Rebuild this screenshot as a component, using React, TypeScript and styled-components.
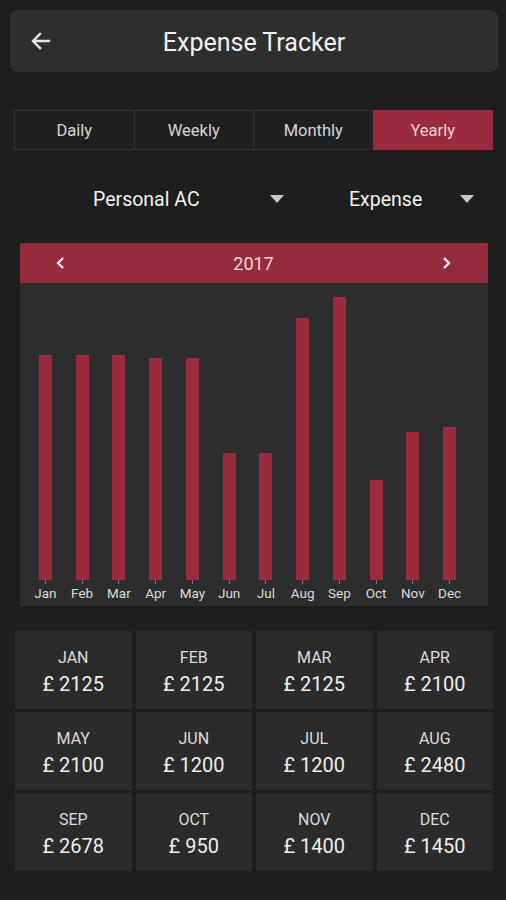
import styled, { createGlobalStyle } from 'styled-components'

const months = [
    { short: 'Jan', value: 2125 },
    { short: 'Feb', value: 2125 },
    { short: 'Mar', value: 2125 },
    { short: 'Apr', value: 2100 },
    { short: 'May', value: 2100 },
    { short: 'Jun', value: 1200 },
    { short: 'Jul', value: 1200 },
    { short: 'Aug', value: 2480 },
    { short: 'Sep', value: 2678 },
    { short: 'Oct', value: 950 },
    { short: 'Nov', value: 1400 },
    { short: 'Dec', value: 1450 },
]

const tabs = ['Daily', 'Weekly', 'Monthly', 'Yearly']

const PX_PER_UNIT = 0.1057

const BackArrow = () => (
    <svg width="24" height="24" viewBox="0 0 24 24" fill="none">
        <path d="M20 12H5M11 5l-7 7 7 7" stroke="#e6e6e6" strokeWidth="2.4" strokeLinecap="square" />
    </svg>
)

const Chevron = ({ dir }: { dir: 'left' | 'right' }) => (
    <svg width="14" height="14" viewBox="0 0 14 14" fill="none">
        <path
            d={dir === 'left' ? 'M9 2L4 7l5 5' : 'M5 2l5 5-5 5'}
            stroke="#f2f2f2"
            strokeWidth="2.2"
        />
    </svg>
)

export default function App() {
    return (
        <>
            <GlobalStyle />
            <Page>
                <Header>
                    <BackButton>
                        <BackArrow />
                    </BackButton>
                    <Title>Expense Tracker</Title>
                </Header>

                <Tabs>
                    {tabs.map((tab) => (
                        <Tab key={tab} $active={tab === 'Yearly'}>
                            {tab}
                        </Tab>
                    ))}
                </Tabs>

                <Filters>
                    <Dropdown $width={197}>
                        Personal AC
                        <Caret />
                    </Dropdown>
                    <Dropdown $width={131}>
                        Expense
                        <Caret />
                    </Dropdown>
                </Filters>

                <ChartCard>
                    <ChartHeader>
                        <Chevron dir="left" />
                        <Year>2017</Year>
                        <Chevron dir="right" />
                    </ChartHeader>
                    <Plot>
                        {months.map((m) => (
                            <BarColumn key={m.short}>
                                <Bar style={{ height: Math.round(m.value * PX_PER_UNIT) }} />
                                <Tick />
                                <BarLabel>{m.short}</BarLabel>
                            </BarColumn>
                        ))}
                    </Plot>
                </ChartCard>

                <Totals>
                    {months.map((m) => (
                        <Cell key={m.short}>
                            <CellMonth>{m.short.toUpperCase()}</CellMonth>
                            <CellValue>£ {m.value}</CellValue>
                        </Cell>
                    ))}
                </Totals>
            </Page>
        </>
    )
}

const GlobalStyle = createGlobalStyle`
    body {
        margin: 0;
        background: #1e1e1e;
        font-family: Roboto, "Noto Sans", sans-serif;
    }
`

const Page = styled.div`
    width: 506px;
    height: 900px;
    background: #1e1e1e;
    display: flex;
    flex-direction: column;
    padding-top: 10px;
    box-sizing: border-box;
`

const Header = styled.div`
    margin: 0 8px 0 10px;
    height: 62px;
    border-radius: 8px;
    background: #2e2e2e;
    display: flex;
    align-items: center;
`

const BackButton = styled.div`
    width: 24px;
    height: 24px;
    margin-left: 19px;
    display: flex;
`

const Title = styled.div`
    flex: 1;
    text-align: center;
    margin-right: 43px;
    color: #f2f2f2;
    font-size: 25px;
    padding-top: 2px;
`

const Tabs = styled.div`
    margin: 38px 13px 0 15px;
    display: grid;
    grid-template-columns: repeat(4, 1fr);
    height: 40px;
`

const Tab = styled.div<{ $active?: boolean }>`
    display: flex;
    align-items: center;
    justify-content: center;
    font-size: 16.5px;
    color: ${({ $active }) => ($active ? '#e9d3d6' : '#d6d6d6')};
    background: ${({ $active }) => ($active ? '#9a2b3c' : '#1f1f1f')};
    border: 1.5px solid ${({ $active }) => ($active ? '#9a2b3c' : '#323232')};
    margin-left: -1px;
`

const Filters = styled.div`
    display: flex;
    height: 42px;
    margin-top: 28px;
    padding-left: 93px;
    gap: 59px;
    align-items: center;
`

const Dropdown = styled.div<{ $width: number }>`
    width: ${({ $width }) => $width}px;
    display: flex;
    align-items: center;
    justify-content: space-between;
    color: #f2f2f2;
    font-size: 19.5px;
`

const Caret = styled.span`
    width: 0;
    height: 0;
    border-left: 7px solid transparent;
    border-right: 7px solid transparent;
    border-top: 8px solid #c8c8c8;
    margin-right: 6px;
`

const ChartCard = styled.div`
    margin: 23px 18px 0 20px;
    background: #2d2d2d;
    border-radius: 2px;
    overflow: hidden;
    display: flex;
    flex-direction: column;
`

const ChartHeader = styled.div`
    height: 40px;
    background: #952c3c;
    display: flex;
    align-items: center;
    justify-content: space-between;
    padding: 0 35px 0 34px;
`

const Year = styled.div`
    color: #eadada;
    font-size: 18px;
`

const Plot = styled.div`
    height: 323px;
    display: grid;
    grid-template-columns: repeat(12, 1fr);
    padding: 0 20px 4px 7px;
    box-sizing: border-box;
`

const BarColumn = styled.div`
    display: flex;
    flex-direction: column;
    align-items: center;
    justify-content: flex-end;
`

const Bar = styled.div`
    width: 13px;
    background: #9a2b3c;
`

const Tick = styled.div`
    width: 1px;
    height: 4px;
    background: #777;
`

const BarLabel = styled.div`
    color: #dcdcdc;
    font-size: 13.5px;
    line-height: 18px;
`

const Totals = styled.div`
    margin: 25px 13px 0 15px;
    display: grid;
    grid-template-columns: repeat(4, 1fr);
    grid-auto-rows: 78px;
    gap: 3px 4px;
`

const Cell = styled.div`
    background: #2b2b2b;
    display: flex;
    flex-direction: column;
    align-items: center;
    padding-top: 17px;
    box-sizing: border-box;
`

const CellMonth = styled.div`
    color: #dcdcdc;
    font-size: 16px;
    line-height: 20px;
`

const CellValue = styled.div`
    color: #efefef;
    font-size: 20px;
    line-height: 26px;
    margin-top: 3px;
`
